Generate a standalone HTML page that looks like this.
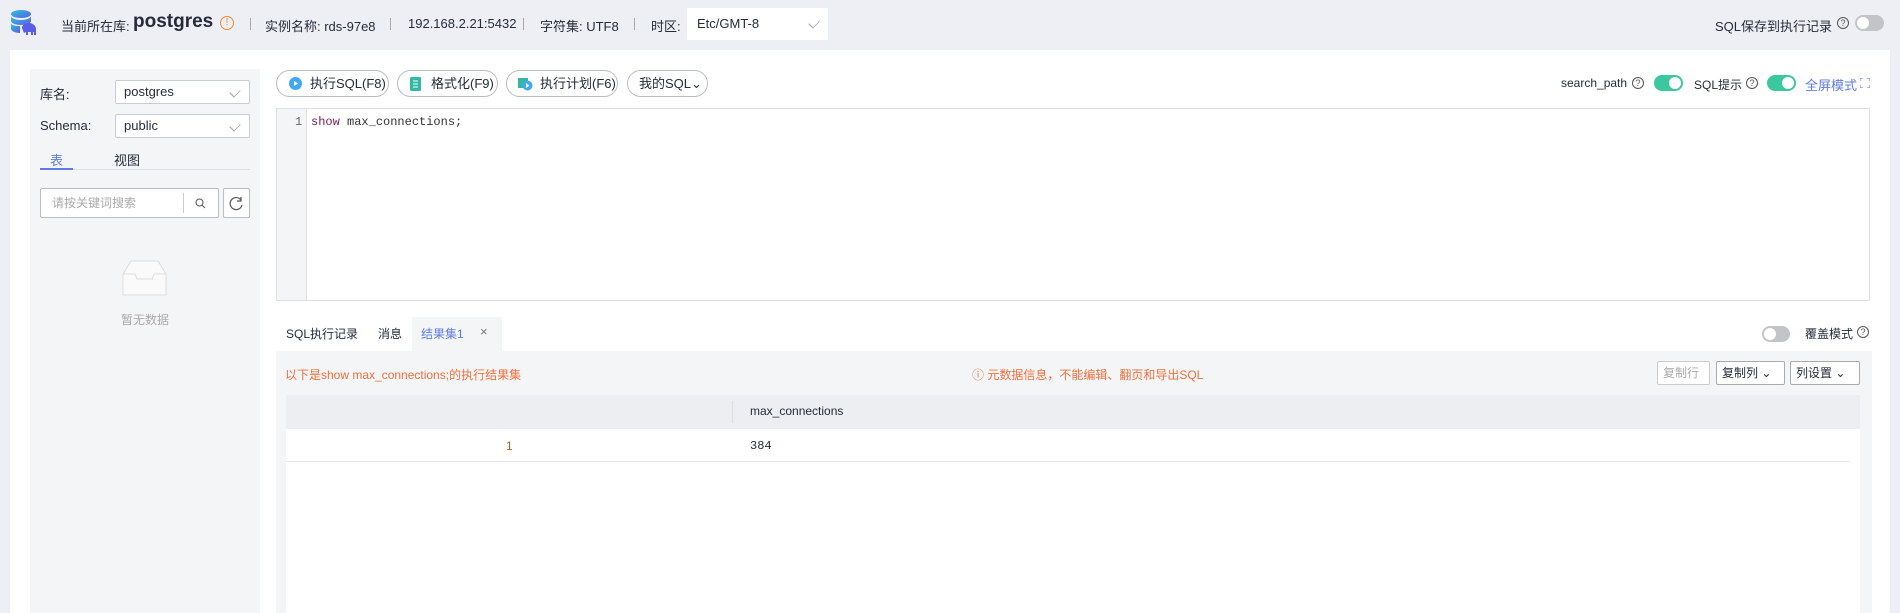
<!DOCTYPE html>
<html><head><meta charset="utf-8"><style>
*{box-sizing:border-box;margin:0;padding:0}
body{width:1900px;height:613px;overflow:hidden;background:#eeeff4;font-family:"Liberation Sans","Noto Sans CJK SC",sans-serif;font-size:13px;color:#252b3a;position:relative}
.a{position:absolute;white-space:nowrap}
.sep{position:absolute;top:18px;width:1px;height:12px;background:#aaa}
.sel{position:absolute;background:#fff;border:1px solid #c9ccd3;border-radius:2px;padding-left:8px;line-height:22px;font-size:13px}
.chev{position:absolute;right:10px;top:7px;width:8px;height:8px;border-right:1px solid #aaa;border-bottom:1px solid #aaa;transform:rotate(45deg) scale(.8,1.2)}
.btn{position:absolute;top:70px;height:27px;border:1px solid #b8bcc4;border-radius:14px;background:#fff;font-size:13px;line-height:25px;padding-left:33px}
.tg{position:absolute;width:29px;height:16px;border-radius:8px}
.tg i{position:absolute;top:2px;width:12px;height:12px;border-radius:6px;background:#fff}
.q{position:absolute;width:12px;height:12px;border:1px solid #555;border-radius:50%;font-size:9px;line-height:10px;text-align:center;color:#555}
.sb{position:absolute;top:361px;height:24px;border:1px solid #aaa;border-radius:2px;background:#fff;font-size:12px;line-height:22px;padding-left:5px}
.r{position:absolute;white-space:nowrap;text-align:right}
</style></head><body>
<svg class="a" style="left:10px;top:9px" width="28" height="30" viewBox="0 0 28 30"><defs><linearGradient id="g" x1="0" y1="0" x2="1" y2="1"><stop offset="0" stop-color="#2fc4d8"/><stop offset="1" stop-color="#5a5de8"/></linearGradient></defs><ellipse cx="11" cy="5" rx="10" ry="4" fill="url(#g)"/><path d="M1 7v5c0 2 4 4 10 4s10-2 10-4V7c0 2-4 4-10 4S1 9 1 7z" fill="url(#g)"/><path d="M1 14v6c0 2 4 4 9 4v-7C5 17 1 16 1 14z" fill="url(#g)"/><path d="M12 19c0-3 3-5 7-5s7 3 7 6v6h-2v-3h-1v3h-2v-3h-3v3h-2v-3l-2 1z" fill="#5a5de8"/></svg>
<div class="a" style="left:61px;top:16px;font-size:13px">当前所在库:</div>
<div class="a" style="left:133px;top:11px;font-size:19px;font-weight:bold">postgres</div>
<div class="a" style="left:220px;top:16px;width:14px;height:14px;border:1px solid #f08a3c;border-radius:50%;color:#f08a3c;font-size:10px;line-height:12px;text-align:center">!</div>
<div class="sep" style="left:250px"></div>
<div class="a" style="left:265px;top:16px">实例名称: rds-97e8</div>
<div class="sep" style="left:390px"></div>
<div class="a" style="left:408px;top:16px">192.168.2.21:5432</div>
<div class="sep" style="left:523px"></div>
<div class="a" style="left:540px;top:16px">字符集: UTF8</div>
<div class="sep" style="left:634px"></div>
<div class="a" style="left:651px;top:16px">时区:</div>
<div class="a" style="left:687px;top:8px;width:141px;height:32px;background:#fff;padding-left:10px;line-height:32px">Etc/GMT-8<span class="chev" style="top:11px"></span></div>
<div class="r" style="right:68px;top:16px">SQL保存到执行记录</div>
<div class="q" style="left:1837px;top:17px">?</div>
<div class="tg" style="left:1855px;top:15px;background:#c2c4c8"><i style="left:2px"></i></div>

<div class="a" style="left:10px;top:50px;width:1880px;height:563px;background:#fff"></div>
<div class="a" style="left:30px;top:69px;width:230px;height:544px;background:#f4f5f7"></div>
<div class="a" style="left:40px;top:84px">库名:</div>
<div class="sel" style="left:115px;top:80px;width:135px;height:24px">postgres<span class="chev"></span></div>
<div class="a" style="left:40px;top:118px">Schema:</div>
<div class="sel" style="left:115px;top:114px;width:135px;height:24px">public<span class="chev"></span></div>
<div class="a" style="left:50px;top:150px;color:#5e7ce0">表</div>
<div class="a" style="left:114px;top:150px">视图</div>
<div class="a" style="left:40px;top:169px;width:210px;height:1px;background:#dfe1e6"></div>
<div class="a" style="left:40px;top:168px;width:33px;height:2px;background:#5e7ce0"></div>
<div class="a" style="left:40px;top:188px;width:179px;height:30px;background:#fff;border:1px solid #b8bcc4;border-radius:2px;color:#aaa;padding-left:11px;line-height:28px;font-size:12px">请按关键词搜索</div>
<div class="a" style="left:183px;top:193px;width:1px;height:20px;background:#ccc"></div>
<svg class="a" style="left:195px;top:198px" width="11" height="11" viewBox="0 0 11 11"><circle cx="4.5" cy="4.5" r="3.5" fill="none" stroke="#555"/><path d="M7 7l3 3" stroke="#555"/></svg>
<div class="a" style="left:223px;top:188px;width:27px;height:30px;background:#fff;border:1px solid #b8bcc4;border-radius:2px"></div>
<svg class="a" style="left:229px;top:196px" width="15" height="15" viewBox="0 0 15 15"><path d="M12 4A6 6 0 1 0 13 9" fill="none" stroke="#555" stroke-width="1.2"/><path d="M12 1v4H8" fill="none" stroke="#555" stroke-width="1.2"/></svg>
<svg class="a" style="left:122px;top:260px" width="45" height="37" viewBox="0 0 45 37"><path d="M1 14L9 1h27l8 13v21H1z" fill="#fafafa" stroke="#ddd"/><path d="M1 14h12l2 5h15l2-5h12" fill="none" stroke="#ddd"/></svg>
<div class="a" style="left:121px;top:311px;color:#aaa;font-size:12px">暂无数据</div>

<div class="btn" style="left:276px;width:113px"><svg class="a" style="left:12px;top:6px" width="13" height="13"><circle cx="6.5" cy="6.5" r="6.5" fill="#3fa9f5"/><path d="M5 4l4 2.5L5 9z" fill="#fff"/></svg>执行SQL(F8)</div>
<div class="btn" style="left:397px;width:101px"><svg class="a" style="left:12px;top:6px" width="11" height="14"><rect width="11" height="14" rx="1.5" fill="#33b8a4"/><path d="M3 4h5M3 7h5M3 10h5" stroke="#fff"/></svg>格式化(F9)</div>
<div class="btn" style="left:506px;width:112px"><svg class="a" style="left:11px;top:5px" width="15" height="15"><rect x="0" y="2" width="10" height="10" fill="#33b8a4"/><circle cx="9.5" cy="9.5" r="5" fill="#3fa9f5"/><path d="M8 7l3.5 2.5L8 12z" fill="#fff"/></svg>执行计划(F6)</div>
<div class="btn" style="left:627px;width:81px;padding-left:11px">我的SQL⌄</div>
<div class="a" style="left:1561px;top:76px;font-size:12px">search_path</div>
<div class="q" style="left:1632px;top:77px">?</div>
<div class="tg" style="left:1654px;top:75px;background:#3cc79e"><i style="left:15px"></i></div>
<div class="a" style="left:1694px;top:76px;font-size:12px">SQL提示</div>
<div class="q" style="left:1746px;top:77px">?</div>
<div class="tg" style="left:1767px;top:75px;background:#3cc79e"><i style="left:15px"></i></div>
<div class="a" style="left:1805px;top:75px;color:#5e7ce0">全屏模式</div>
<svg class="a" style="left:1860px;top:78px" width="10" height="10" viewBox="0 0 10 10"><path d="M0 3V0h3M7 0h3v3M10 7v3H7M3 10H0V7" fill="none" stroke="#5e7ce0"/></svg>

<div class="a" style="left:276px;top:108px;width:1594px;height:193px;border:1px solid #dcdfe6"></div>
<div class="a" style="left:277px;top:109px;width:30px;height:191px;background:#f4f5f7;border-right:1px solid #e0e0e0"></div>
<div class="a" style="left:295px;top:115px;font-family:'Liberation Mono',monospace;font-size:12px;color:#666">1</div>
<div class="a" style="left:311px;top:115px;font-family:'Liberation Mono',monospace;font-size:12px;color:#333"><span style="color:#7a1a5a">show</span> max_connections;</div>

<div class="a" style="left:286px;top:325px;font-size:12px">SQL执行记录</div>
<div class="a" style="left:378px;top:325px;font-size:12px">消息</div>
<div class="a" style="left:412px;top:317px;width:90px;height:34px;background:#f4f5f7"></div>
<div class="a" style="left:421px;top:325px;font-size:12px;color:#5e7ce0">结果集1</div>
<div class="a" style="left:480px;top:324px;font-size:13px;color:#777">×</div>
<div class="tg" style="left:1762px;top:326px;background:#c2c4c8;width:28px"><i style="left:2px"></i></div>
<div class="a" style="left:1805px;top:325px;font-size:12px">覆盖模式</div>
<div class="q" style="left:1857px;top:326px">?</div>

<div class="a" style="left:276px;top:351px;width:1596px;height:262px;background:#f4f5f7"></div>
<div class="a" style="left:285px;top:366px;font-size:12px;color:#f36f3d">以下是show max_connections;的执行结果集</div>
<div class="a" style="left:972px;top:366px;font-size:12px;color:#f36f3d">ⓘ 元数据信息，不能编辑、翻页和导出SQL</div>
<div class="sb" style="left:1657px;width:53px;color:#aaa;border-color:#ccc">复制行</div>
<div class="sb" style="left:1716px;width:69px">复制列 ⌄</div>
<div class="sb" style="left:1790px;width:70px">列设置 ⌄</div>
<div class="a" style="left:286px;top:395px;width:1574px;height:218px;background:#fff"></div>
<div class="a" style="left:286px;top:395px;width:1574px;height:34px;background:#eceef2"></div>
<div class="a" style="left:732px;top:401px;width:1px;height:22px;background:#ddd"></div>
<div class="a" style="left:750px;top:404px;font-size:12px">max_connections</div>
<div class="a" style="left:506px;top:439px;font-size:12px;color:#8a6a2a">1</div>
<div class="a" style="left:750px;top:439px;font-size:12px;font-family:'Liberation Mono',monospace">384</div>
<div class="a" style="left:286px;top:461px;width:1564px;height:1px;background:#e6e8ec"></div>
</body></html>
